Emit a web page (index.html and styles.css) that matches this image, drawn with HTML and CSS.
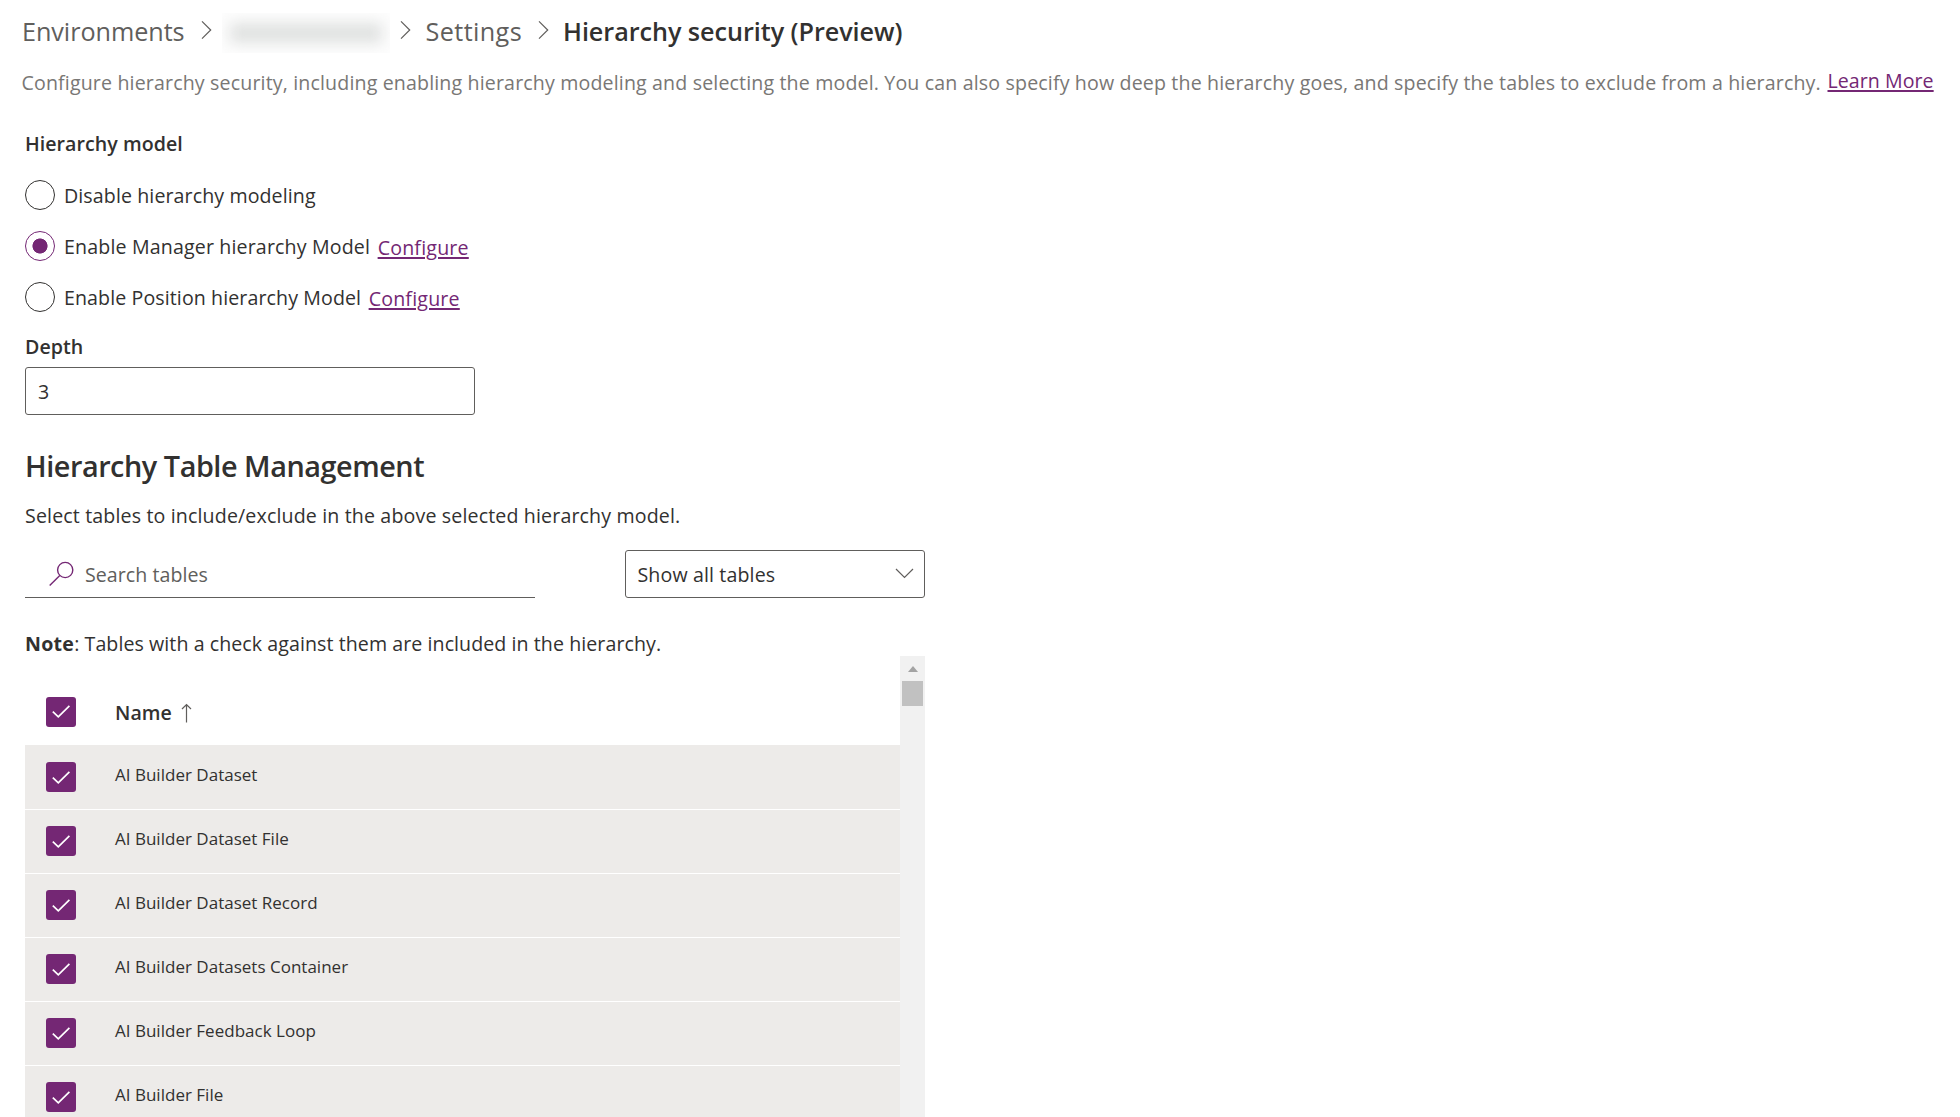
FILE: index.html
```html
<!DOCTYPE html>
<html lang="en">
<head>
<meta charset="utf-8">
<title>Hierarchy security (Preview)</title>
<link rel="stylesheet" href="styles.css">
</head>
<body>
<svg class="defs" width="0" height="0" aria-hidden="true">
  <symbol id="tick" viewBox="0 0 30 30"><path d="M6.8 14.6 L12.3 19.9 L23.4 8.9" fill="none" stroke="#fff" stroke-width="1.7"/></symbol>
  <symbol id="chevron" viewBox="0 0 11 20"><path d="M1 1.3 L9.7 10 L1 18.7" fill="none" stroke="#605e5c" stroke-width="1.2"/></symbol>
</svg>
<nav class="breadcrumb">
  <a class="crumb">Environments</a>
  <svg class="sep sep-1"><use href="#chevron"/></svg>
  <span class="redacted"></span>
  <svg class="sep sep-2"><use href="#chevron"/></svg>
  <a class="crumb crumb-settings">Settings</a>
  <svg class="sep sep-3"><use href="#chevron"/></svg>
  <span class="crumb-current">Hierarchy security (Preview)</span>
</nav>
<div class="intro">
  <p class="intro-text">Configure hierarchy security, including enabling hierarchy modeling and selecting the model. You can also specify how deep the hierarchy goes, and specify the tables to exclude from a hierarchy.</p>
  <a class="link learn-more">Learn More</a>
</div>
<main class="content">
  <h3 class="label">Hierarchy model</h3>
  <div class="radios">
    <div class="radio"><span class="circle"></span><span class="radio-text radio-disable">Disable hierarchy modeling</span></div>
    <div class="radio"><span class="circle selected"></span><span class="radio-text radio-manager">Enable Manager hierarchy Model</span><a class="link configure">Configure</a></div>
    <div class="radio"><span class="circle"></span><span class="radio-text radio-position">Enable Position hierarchy Model</span><a class="link configure">Configure</a></div>
  </div>
  <h3 class="label depth-label">Depth</h3>
  <div class="field">3</div>
  <h2 class="heading">Hierarchy Table Management</h2>
  <p class="help">Select tables to include/exclude in the above selected hierarchy model.</p>
  <div class="filters">
    <div class="search">
      <svg class="search-icon" viewBox="0 0 26 26" fill="none" stroke="#742774" stroke-width="1.4"><circle cx="16.2" cy="9" r="7.6"/><path d="M10.8 14.6 L0.7 24.6"/></svg>
      <span>Search tables</span>
    </div>
    <div class="dropdown">
      <span>Show all tables</span>
      <svg class="caret" viewBox="0 0 19 11"><path d="M1 1 L9.5 9.5 L18 1" fill="none" stroke="#605e5c" stroke-width="1.2"/></svg>
    </div>
  </div>
  <p class="note"><b>Note</b>: Tables with a check against them are included in the hierarchy.</p>
  <div class="list">
    <div class="rows">
      <div class="row-head">
        <svg class="check"><use href="#tick"/></svg>
        <span class="name">Name</span>
        <svg class="sort" viewBox="0 0 11 20"><path d="M5.5 19.5 V1.5 M1 6 L5.5 1.5 L10 6" fill="none" stroke="#605e5c" stroke-width="1.2"/></svg>
      </div>
      <div class="row"><svg class="check"><use href="#tick" y="1"/></svg><span>AI Builder Dataset</span></div>
      <div class="row"><svg class="check"><use href="#tick" y="1"/></svg><span>AI Builder Dataset File</span></div>
      <div class="row"><svg class="check"><use href="#tick" y="1"/></svg><span>AI Builder Dataset Record</span></div>
      <div class="row"><svg class="check"><use href="#tick" y="1"/></svg><span>AI Builder Datasets Container</span></div>
      <div class="row"><svg class="check"><use href="#tick" y="1"/></svg><span>AI Builder Feedback Loop</span></div>
      <div class="row"><svg class="check"><use href="#tick" y="1"/></svg><span>AI Builder File</span></div>
    </div>
    <div class="scrollbar">
      <span class="arrow"></span>
      <span class="thumb"></span>
    </div>
  </div>
</main>
</body>
</html>
```
FILE: styles.css
```css
* { box-sizing: border-box; }
html, body { margin: 0; height: 1117px; overflow: hidden; background: #fff; }
body {
  display: flex;
  flex-direction: column;
  font: 19.6px/28px "Open Sans", "Noto Sans", sans-serif;
  letter-spacing: 0.13px;
  color: #323130;
}
h2, h3, p { margin: 0; }
svg { display: block; flex: none; }
.defs { position: absolute; }

.breadcrumb {
  display: flex;
  height: 36px;
  margin: 13px 0 0 22px;
  font-size: 25.2px;
  line-height: 36px;
  letter-spacing: -0.05px;
  white-space: nowrap;
}
.crumb { width: 163.5px; color: #605e5c; }
.crumb-settings { width: 97px; margin-left: 14.5px; letter-spacing: 0.4px; }
.crumb-current { margin-left: 14.5px; font-weight: 600; }
.sep { width: 11px; height: 20px; margin-top: 7px; }
.sep-1 { margin-left: 15px; }
.sep-2 { margin-left: 10px; }
.sep-3 { margin-left: 15px; }
.redacted { width: 168px; height: 40px; margin-left: 10.5px; overflow: hidden; background: #fdfdfd; flex: none; }
.redacted::before {
  content: "";
  display: block;
  width: 152px;
  height: 20px;
  margin: 10px 8px;
  background: #e0e2e1;
  filter: blur(7px);
}

.intro { display: flex; gap: 7px; margin: 20px 0 0 21.5px; white-space: nowrap; }
.intro-text { width: 1799px; color: #797775; letter-spacing: 0.148px; }
.link {
  color: #742774;
  text-decoration: underline;
  text-decoration-thickness: 2px;
  text-underline-offset: 2px;
}
.learn-more { margin-top: -2px; letter-spacing: 0.05px; }

.content { width: 950px; padding: 33px 0 0 25px; white-space: nowrap; }
.label { font-size: 19.6px; font-weight: 600; letter-spacing: 0.04px; }
.radios { display: flex; flex-direction: column; gap: 21px; margin-top: 22px; }
.radio { display: flex; align-items: center; height: 30px; }
.radio-text { padding-top: 2px; }
.radio-disable { letter-spacing: 0.1px; }
.radio-manager { letter-spacing: 0.154px; }
.radio-position { letter-spacing: 0.1px; }
.circle { width: 30px; height: 30px; margin-right: 9px; border: 1px solid #323130; border-radius: 50%; }
.circle.selected {
  border-color: #742774;
  background: radial-gradient(circle, #742774 7.2px, transparent 7.9px);
}
.configure { margin: 4px 0 0 7.5px; letter-spacing: 0.2px; }
.depth-label { margin-top: 21px; }
.field {
  width: 450px;
  height: 48px;
  margin-top: 6px;
  padding: 1px 0 0 12px;
  border: 1px solid #605e5c;
  border-radius: 3px;
  line-height: 46px;
}
.heading {
  margin-top: 31px;
  font-size: 28.8px;
  font-weight: 600;
  line-height: 40px;
  letter-spacing: -0.45px;
}
.help { margin-top: 16px; letter-spacing: 0.145px; }
.filters { display: flex; gap: 90px; margin-top: 20px; }
.search {
  display: flex;
  align-items: center;
  width: 510px;
  height: 48px;
  padding-left: 23.5px;
  border-bottom: 1px solid #605e5c;
  color: #605e5c;
  letter-spacing: 0.05px;
}
.search span, .dropdown span { padding-top: 2px; }
.search-icon { width: 26px; height: 26px; margin-right: 10.5px; }
.dropdown {
  display: flex;
  align-items: center;
  justify-content: space-between;
  width: 300px;
  height: 48px;
  padding: 0 10.5px 0 11.5px;
  border: 1px solid #605e5c;
  border-radius: 3px;
}
.caret { width: 19px; height: 11px; margin-top: -1px; }
.note { height: 26px; margin-top: 32px; letter-spacing: 0.07px; }
.note b { font-weight: 700; letter-spacing: 0.25px; }

.list { display: flex; height: 461px; overflow: hidden; }
.rows { width: 875px; flex: none; }
.check { width: 30px; height: 30px; border-radius: 3px; background: #742774; }
.row-head { display: flex; height: 89px; padding: 41px 0 0 21px; }
.name { margin: 2px 0 0 39px; font-weight: 600; letter-spacing: 0.03px; }
.sort { width: 11px; height: 20px; margin: 6px 0 0 9.5px; }
.row {
  display: flex;
  height: 64px;
  padding: 16px 0 0 21px;
  border-bottom: 1px solid #fff;
  background: #edebe9;
  font-size: 17px;
  line-height: 24px;
  letter-spacing: 0.01px;
}
.row:nth-child(2) { height: 65px; padding-top: 17px; }
.row span { margin: 1px 0 0 39px; }
.scrollbar {
  display: flex;
  flex-direction: column;
  align-items: center;
  width: 25px;
  flex: none;
  background: #f1f1f1;
}
.arrow {
  margin-top: 10px;
  border: solid transparent;
  border-width: 0 5.5px 6px;
  border-bottom-color: #a3a3a3;
}
.thumb { width: 21px; height: 25px; margin-top: 9px; background: #c1c1c1; }
```
